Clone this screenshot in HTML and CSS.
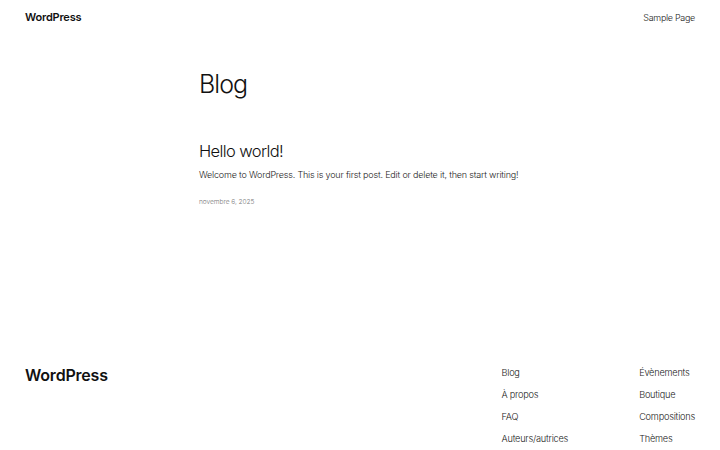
FILE: index.html
```html
<!DOCTYPE html>
<html lang="fr">
<head>
<meta charset="utf-8">
<title>Blog – WordPress</title>
<link rel="stylesheet" href="styles.css">
</head>
<body>
<div class="page">
  <header class="site-header">
    <a class="site-title" href="#">WordPress</a>
    <nav class="header-nav"><a href="#">Sample Page</a></nav>
  </header>
  <main class="main">
    <div class="content">
      <h1 class="page-title">Blog</h1>
      <article class="post">
        <h2 class="post-title">Hello world!</h2>
        <p class="post-excerpt">Welcome to WordPress. This is your first post. Edit or delete it, then start writing!</p>
        <div class="post-date">novembre 6, 2025</div>
      </article>
    </div>
  </main>
  <footer class="site-footer">
    <a class="footer-title" href="#">WordPress</a>
    <div class="footer-nav">
      <ul class="footer-col">
        <li><a href="#">Blog</a></li>
        <li><a href="#">À propos</a></li>
        <li><a href="#">FAQ</a></li>
        <li><a href="#">Auteurs/autrices</a></li>
      </ul>
      <ul class="footer-col">
        <li><a href="#">Évènements</a></li>
        <li><a href="#">Boutique</a></li>
        <li><a href="#">Compositions</a></li>
        <li><a href="#">Thèmes</a></li>
      </ul>
    </div>
  </footer>
</div>
</body>
</html>
```
FILE: styles.css
```css
* { box-sizing: border-box; }
html, body { margin: 0; padding: 0; background: #fff; }
body {
  font-family: Inter, "Noto Sans", sans-serif;
  color: #111;
  -webkit-font-smoothing: antialiased;
}
a { color: inherit; text-decoration: none; }
.page { width: 720px; height: 450px; display: flex; flex-direction: column; }

.site-header {
  display: flex;
  justify-content: space-between;
  align-items: center;
  padding: 0 25px;
  height: 34px;
}
.site-title { font-size: 11px; font-weight: 600; letter-spacing: -0.2px; }
.header-nav { font-size: 9px; font-weight: 300; letter-spacing: -0.3px; color: #222; }

.main { flex: 1; }
.content { width: 322px; margin: 0 auto; padding-top: 34px; }
.page-title { margin: 0; font-size: 25px; font-weight: 300; line-height: 32px; letter-spacing: -0.95px; color: #111; }
.post { margin-top: 40px; }
.post-title { margin: 0; font-size: 16.5px; font-weight: 300; line-height: 22px; letter-spacing: -0.6px; color: #111; }
.post-excerpt { margin: 6px 0 0; font-size: 9px; font-weight: 300; line-height: 14px; letter-spacing: -0.18px; color: #222; white-space: nowrap; }
.post-date { margin-top: 16px; font-size: 6.6px; font-weight: 300; line-height: 9px; letter-spacing: -0.05px; color: #777; }

.site-footer {
  display: flex;
  justify-content: space-between;
  align-items: flex-start;
  padding: 0 25px;
  height: 100px;
}
.footer-title { font-size: 16px; font-weight: 600; margin-top: 15px; letter-spacing: -0.2px; }
.footer-nav { display: flex; gap: 71px; margin-top: 16px; }
.footer-col { list-style: none; margin: 0; padding: 0; display: flex; flex-direction: column; gap: 8px; font-size: 9.2px; font-weight: 300; letter-spacing: -0.22px; color: #222; }
.footer-col li { line-height: 14px; }
```
